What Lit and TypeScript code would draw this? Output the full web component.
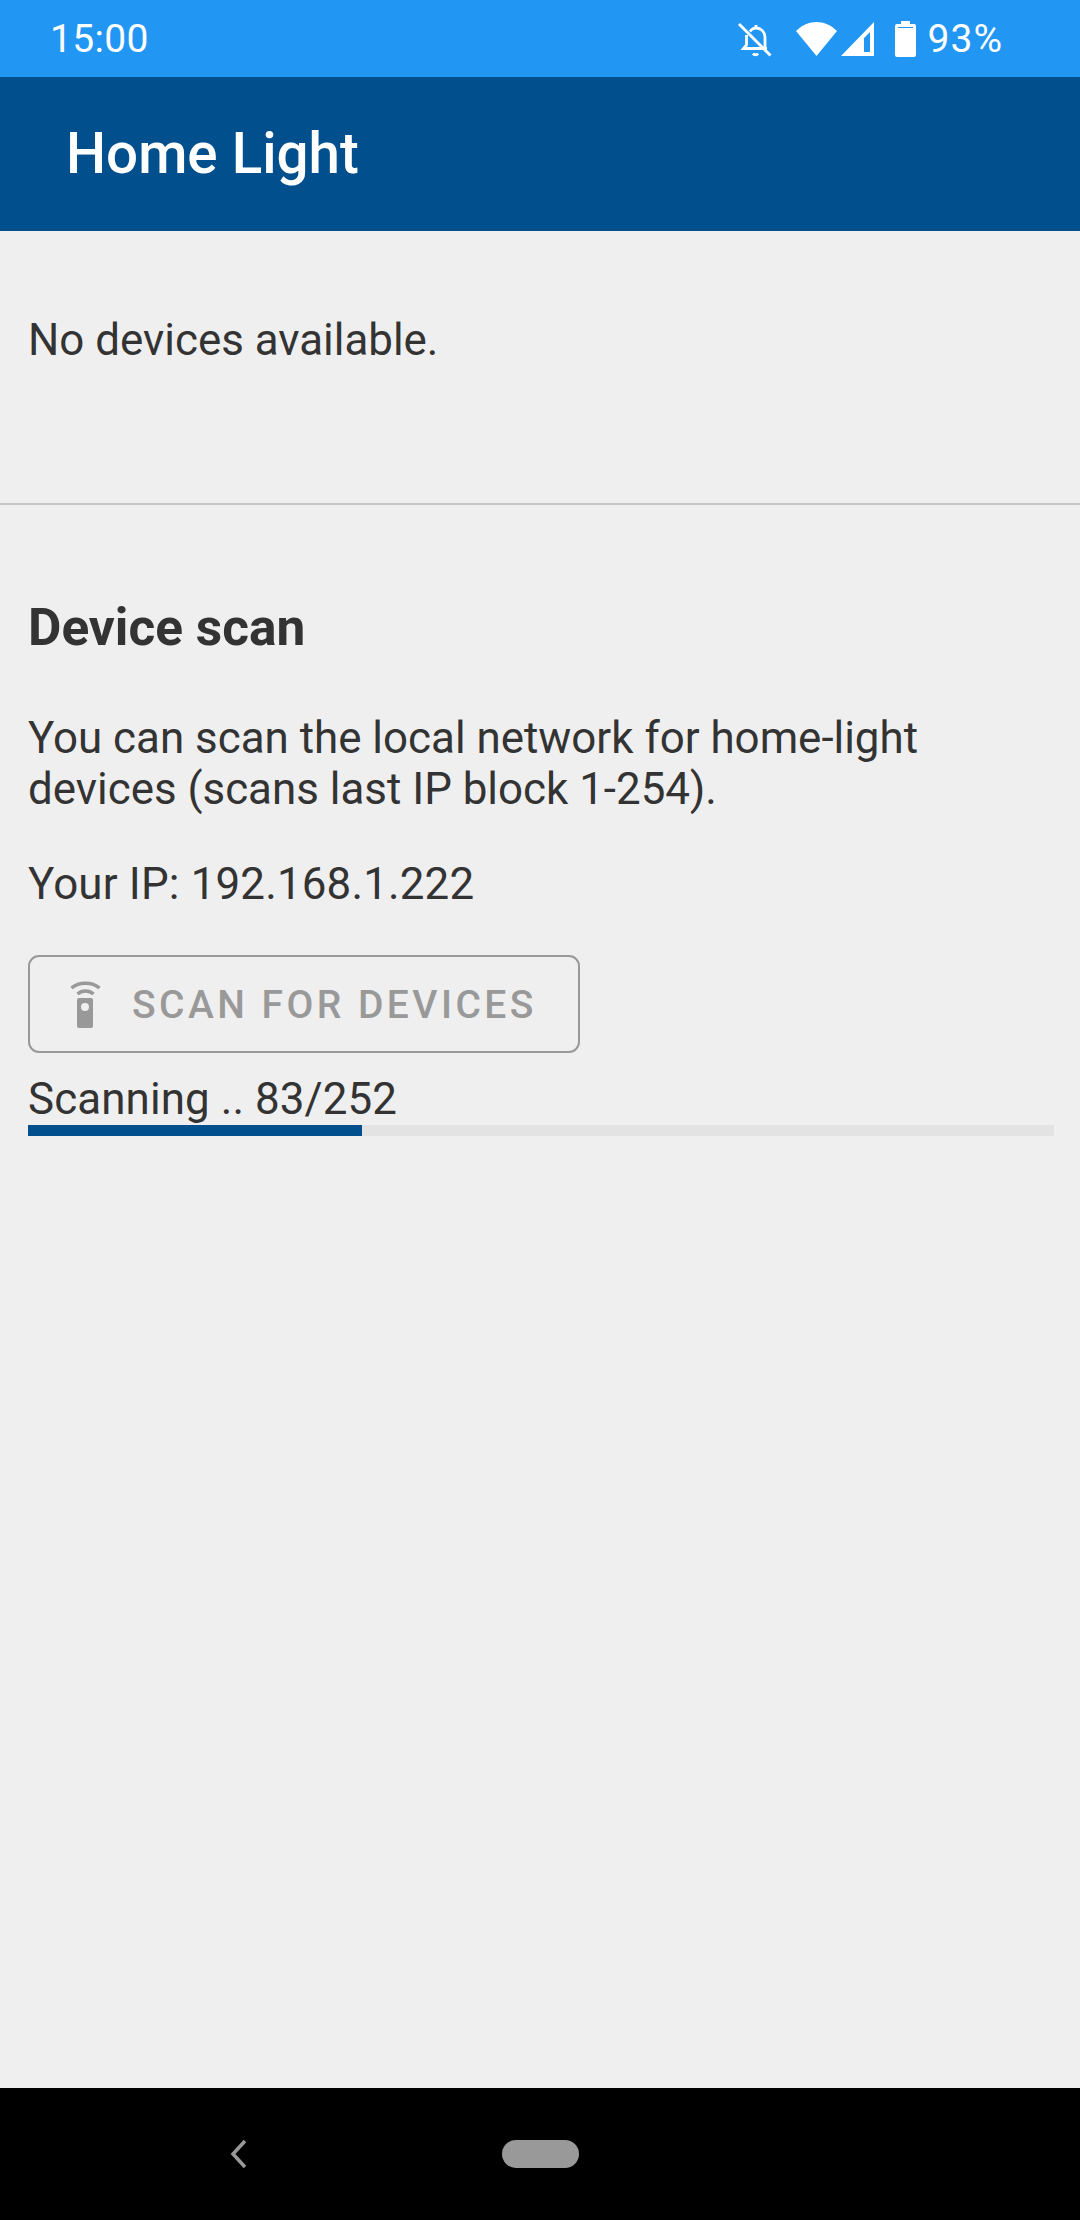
import { LitElement, css, html, svg } from "lit";
import { customElement, property } from "lit/decorators.js";

@customElement("app-root")
export class AppRoot extends LitElement {
  @property({ type: Number }) progress = 0.3255;

  static styles = css`
    :host {
      display: block;
      width: 1080px;
      height: 2220px;
      font-family: Roboto, "Liberation Sans", sans-serif;
      color: #333;
      background: #efefef;
    }

    .page {
      height: 100%;
      display: flex;
      flex-direction: column;
    }

    .status {
      height: 77px;
      background: #2196f3;
      color: #fff;
      display: flex;
      align-items: center;
      justify-content: space-between;
      padding: 0 77px 0 50px;
      font-size: 39px;
    }

    .time {
      letter-spacing: 0.3px;
    }

    .status-icons {
      display: flex;
      align-items: center;
    }

    .status-icons svg {
      display: block;
    }

    .bell {
      margin-top: 3px;
    }

    .wifi {
      margin-left: 24px;
    }

    .signal {
      margin: 1px 0 0 4px;
    }

    .battery {
      margin-left: 20px;
    }

    .level {
      margin-left: 12px;
      letter-spacing: 1px;
    }

    .appbar {
      height: 154px;
      background: #014f8c;
      color: #fff;
      display: flex;
      align-items: center;
      padding-left: 66px;
      font-size: 56.5px;
      font-weight: 500;
    }

    .content {
      flex: 1;
    }

    .devices {
      height: 188px;
      border-bottom: 2px solid #c4c4c4;
      padding: 84px 28px 0;
      font-size: 43.9px;
      line-height: 51px;
    }

    .scan {
      padding: 95px 26px 0 28px;
      font-size: 43.9px;
      line-height: 51px;
    }

    h2 {
      margin: 0 0 58px;
      font-size: 51.4px;
      font-weight: 700;
      line-height: 55px;
    }

    p {
      margin: 0;
    }

    .ip {
      margin-top: 44px;
      letter-spacing: 0.17px;
    }

    .scan-button {
      margin-top: 45px;
      width: 552px;
      height: 98px;
      box-sizing: border-box;
      border: 2px solid #999;
      border-radius: 11px;
      display: flex;
      align-items: center;
      padding-left: 39px;
      gap: 30px;
      color: #999;
      font-size: 39px;
      font-weight: 500;
      letter-spacing: 3.45px;
    }

    .scan-button svg {
      display: block;
    }

    .scan-button span {
      padding-top: 2px;
    }

    .scan-label {
      margin-top: 21px;
      letter-spacing: 0.1px;
    }

    .track {
      height: 11px;
      background: #e3e3e3;
    }

    .fill {
      height: 100%;
      background: #014f8c;
    }

    .navbar {
      height: 132px;
      background: #000;
      display: flex;
      align-items: center;
      padding-left: 228px;
      gap: 254px;
    }

    .navbar svg {
      display: block;
    }

    .pill {
      width: 77px;
      height: 28px;
      border-radius: 14px;
      background: #999;
    }
  `;

  private statusIcons() {
    return html`
      <svg class="bell" width="34" height="34" viewBox="0 0 34 34" fill="none" stroke="#fff" stroke-width="2.8">
        ${svg`<path d="M12 8.5C13 6.5 16 5 18 5C23 5 27 9 27 14V25" />
        <path d="M8.5 12V22L5.5 25.5H29" />
        <path d="M18 5V2" />
        <path d="M15 30.5a3 3 0 0 0 5 0" />
        <path d="M1 1L32.5 32.5" />`}
      </svg>
      <svg class="wifi" width="41" height="34" viewBox="0 0 41 34" fill="#fff">
        ${svg`<path d="M0 9C12 -3 29 -3 41 9L20.5 34Z" />`}
      </svg>
      <svg class="signal" width="34" height="34" viewBox="0 0 34 34" fill="#fff">
        ${svg`<path fill-rule="evenodd" d="M0 34L33 0V34ZM23 16V30H29V10Z" />`}
      </svg>
      <svg class="battery" width="21" height="36" viewBox="0 0 21 36" fill="#fff">
        ${svg`<path fill-rule="evenodd" d="M6 0h9v3h4a2 2 0 0 1 2 2v29a2 2 0 0 1-2 2H2a2 2 0 0 1-2-2V5a2 2 0 0 1 2-2h4ZM3 6v1h15V6Z" />`}
      </svg>
      <span class="level">93%</span>
    `;
  }

  render() {
    return html`
      <div class="page">
        <div class="status">
          <span class="time">15:00</span>
          <div class="status-icons">${this.statusIcons()}</div>
        </div>
        <div class="appbar">Home Light</div>
        <div class="content">
          <div class="devices">No devices available.</div>
          <div class="scan">
            <h2>Device scan</h2>
            <p>You can scan the local network for home-light<br />devices (scans last IP block 1-254).</p>
            <p class="ip">Your IP: 192.168.1.222</p>
            <div class="scan-button">
              <svg width="33" height="48" viewBox="0 0 33 48" fill="none">
                ${svg`<path d="M2.5 8C10 1.5 23 1.5 30.5 8" stroke="#999" stroke-width="3.5" />
                <path d="M8.5 14C13 10 20 10 24.5 14" stroke="#999" stroke-width="3.5" />
                <path fill="#999" fill-rule="evenodd" d="M10 18h12a2 2 0 0 1 2 2v26a2 2 0 0 1-2 2H10a2 2 0 0 1-2-2V20a2 2 0 0 1 2-2ZM16 23a4 4 0 1 0 0 8a4 4 0 1 0 0-8Z" />`}
              </svg>
              <span>SCAN FOR DEVICES</span>
            </div>
            <div class="scan-label">Scanning .. 83/252</div>
            <div class="track">
              <div class="fill" style="width:${this.progress * 100}%"></div>
            </div>
          </div>
        </div>
        <div class="navbar">
          <svg width="20" height="30" viewBox="0 0 20 30" fill="none" stroke="#999" stroke-width="3.5">
            ${svg`<path d="M17 2L5 15L17 28" />`}
          </svg>
          <div class="pill"></div>
        </div>
      </div>
    `;
  }
}
